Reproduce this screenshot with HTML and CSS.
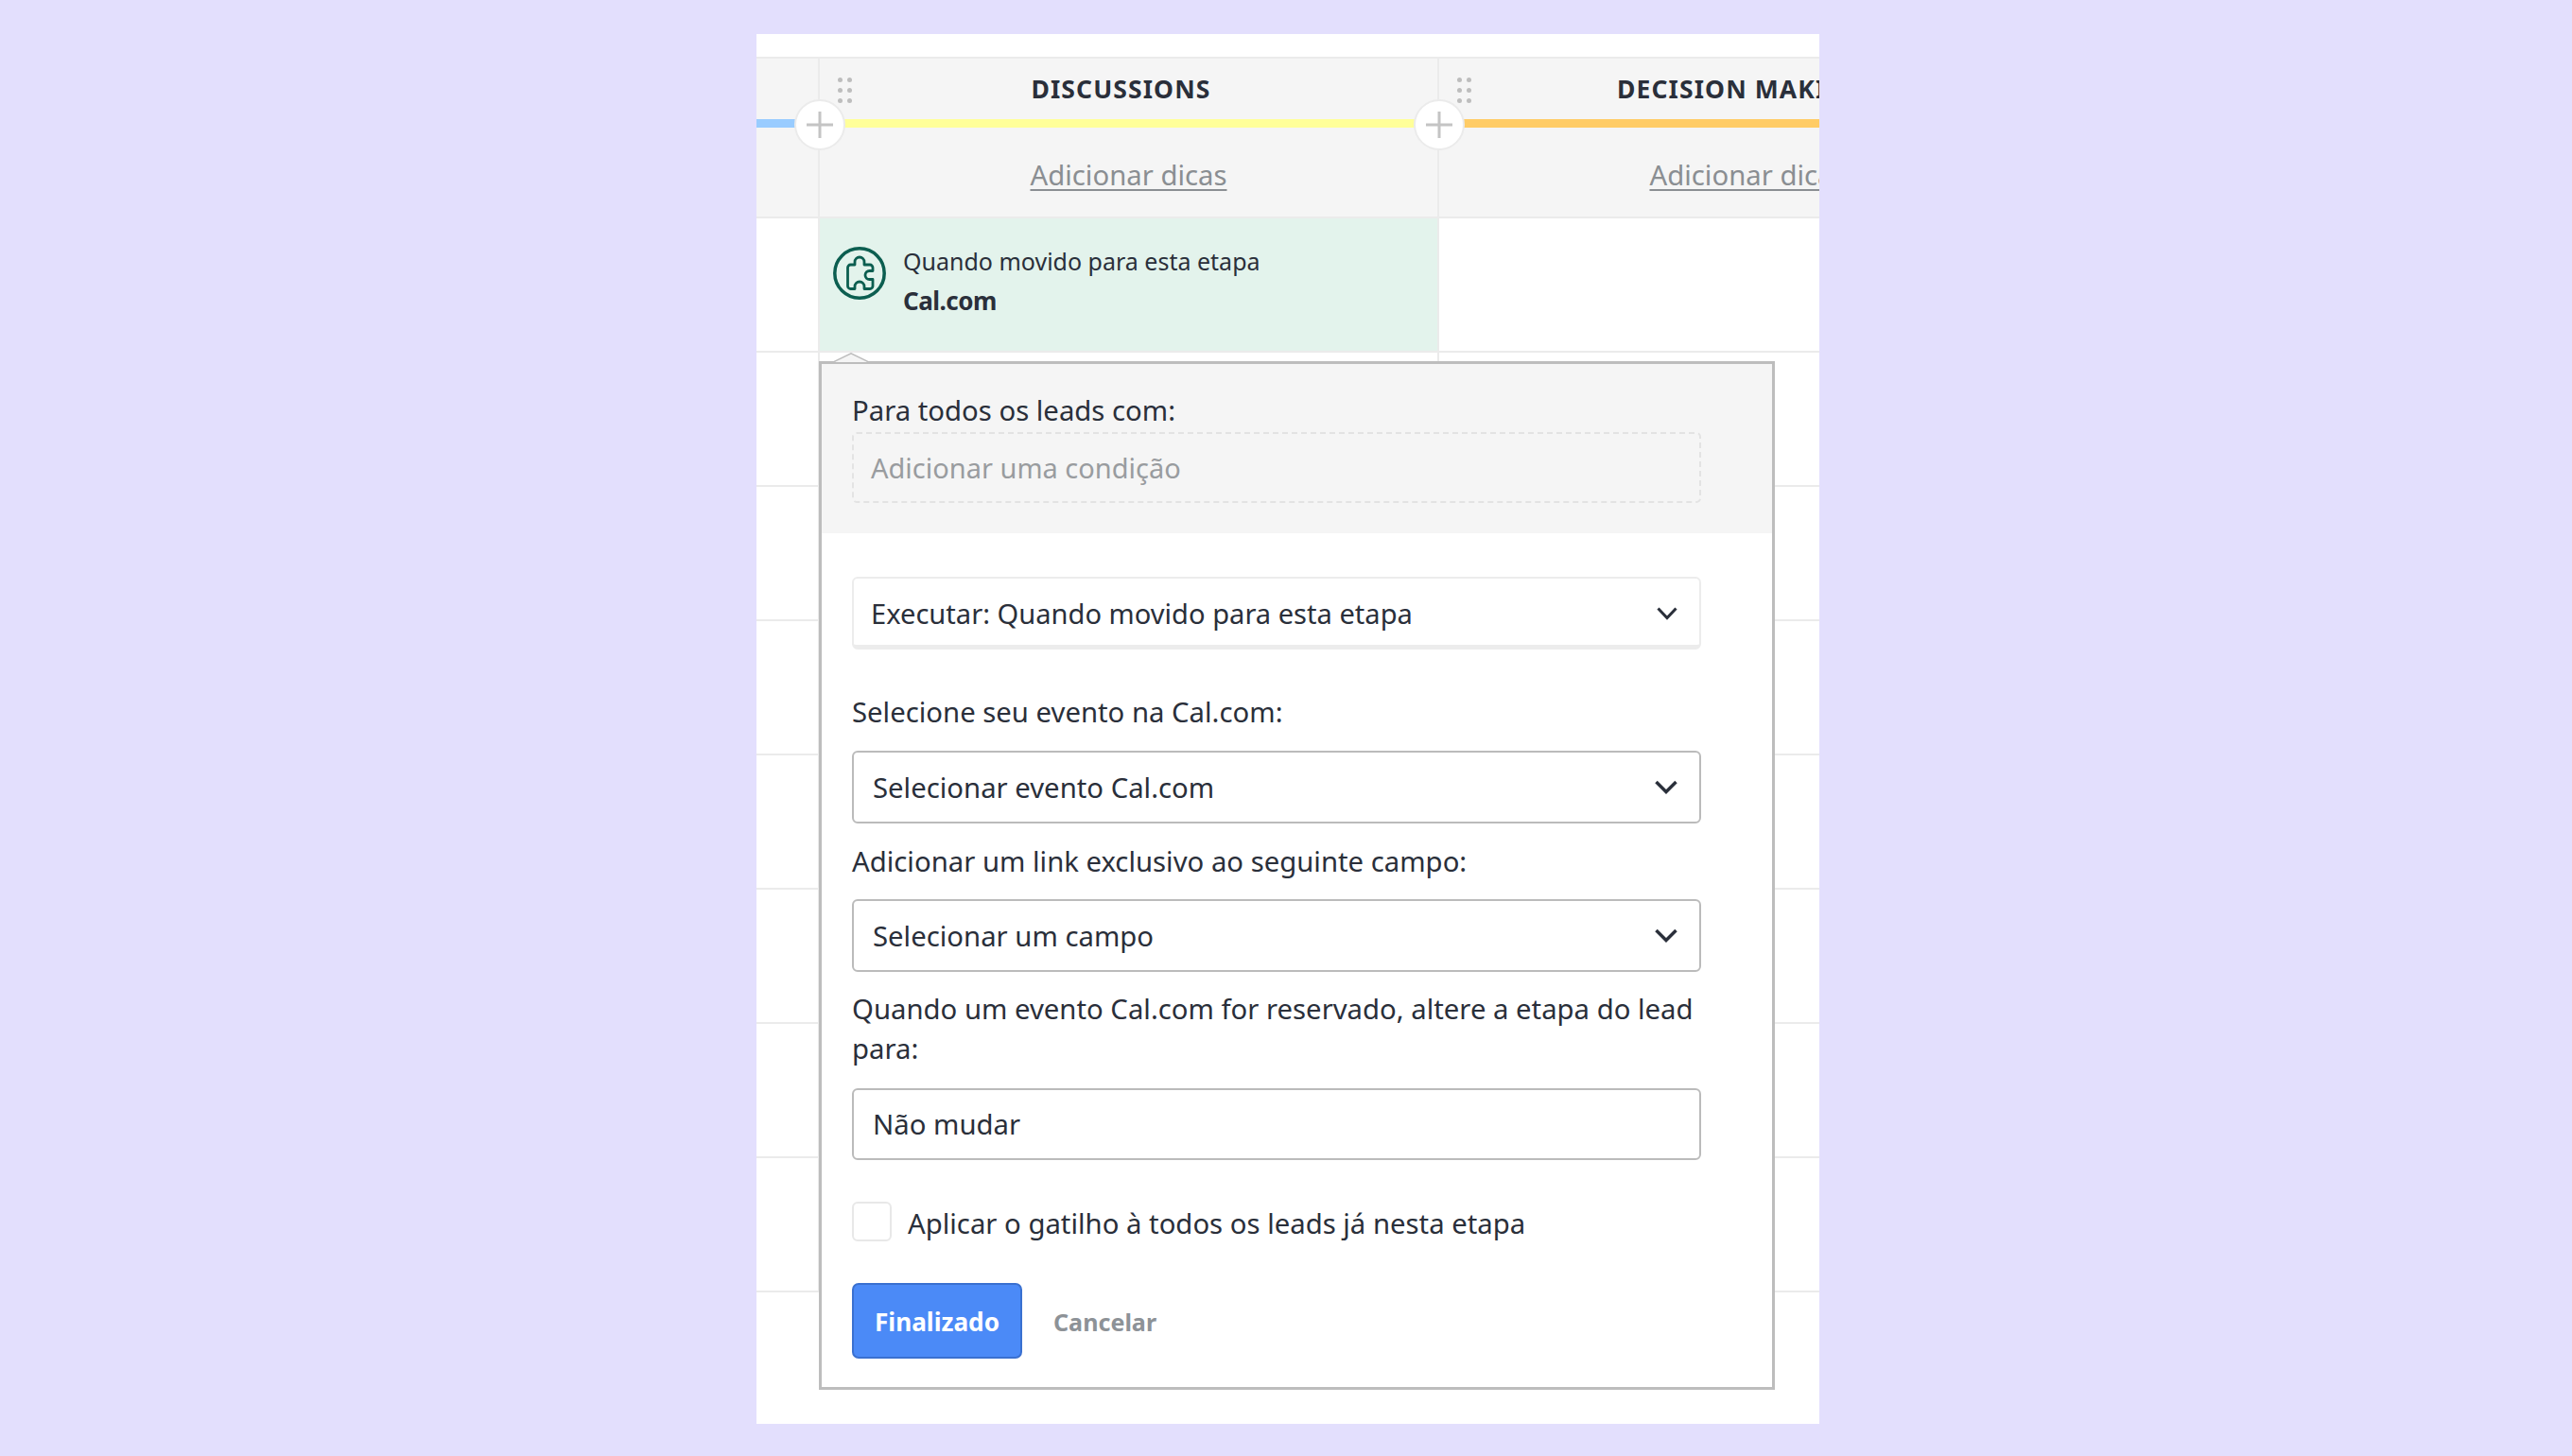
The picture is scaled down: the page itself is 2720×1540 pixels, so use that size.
FILE: index.html
```html
<!DOCTYPE html>
<html lang="pt">
<head>
<meta charset="utf-8">
<title>Pipeline</title>
<link rel="stylesheet" href="styles.css">
</head>
<body>
<main class="frame">
  <div class="board">
    <section class="col col-stub">
      <header class="head">
        <div class="title-row"></div>
        <div class="bar bar-blue"></div>
        <div class="tips"></div>
      </header>
      <div class="cell"></div><div class="cell"></div><div class="cell"></div><div class="cell"></div>
      <div class="cell"></div><div class="cell"></div><div class="cell"></div><div class="cell"></div>
    </section>

    <section class="col">
      <header class="head">
        <div class="title-row">
          <span class="dots"><i></i><i></i><i></i><i></i><i></i><i></i></span>
          <h2 class="title">DISCUSSIONS</h2>
        </div>
        <div class="bar bar-yellow"></div>
        <div class="tips"><a class="tips-link">Adicionar dicas</a></div>
      </header>
      <button class="add" aria-label="Adicionar etapa">
        <svg viewBox="0 0 30 30" width="30" height="30"><path d="M15 1v28M1 15h28"/></svg>
      </button>
      <div class="cell cell-trigger">
        <svg class="puzzle" viewBox="0 0 56 56" width="56" height="56">
          <circle cx="28" cy="28" r="26.2"/>
          <path d="M15.5 22a3 3 0 0 1 3-3h4.500v-3a5 5 0 0 1 10 0v3h6a3 3 0 0 1 3 3v3.500h-3.500a4.500 4.500 0 0 0 0 9h3.500v7a3 3 0 0 1-3 3h-6v-2.500a5 5 0 0 0-10 0v2.500h-4.500a3 3 0 0 1-3-3z"/>
        </svg>
        <div class="trigger-text">
          <p class="trigger-when">Quando movido para esta etapa</p>
          <p class="trigger-name">Cal.com</p>
        </div>
      </div>
      <div class="cell"></div><div class="cell"></div><div class="cell"></div>
      <div class="cell"></div><div class="cell"></div><div class="cell"></div><div class="cell"></div>
    </section>

    <section class="col">
      <header class="head">
        <div class="title-row">
          <span class="dots"><i></i><i></i><i></i><i></i><i></i><i></i></span>
          <h2 class="title title-clipped">DECISION MAKING</h2>
        </div>
        <div class="bar bar-orange"></div>
        <div class="tips"><a class="tips-link">Adicionar dicas</a></div>
      </header>
      <button class="add" aria-label="Adicionar etapa">
        <svg viewBox="0 0 30 30" width="30" height="30"><path d="M15 1v28M1 15h28"/></svg>
      </button>
      <div class="cell"></div><div class="cell"></div><div class="cell"></div><div class="cell"></div>
      <div class="cell"></div><div class="cell"></div><div class="cell"></div><div class="cell"></div>
    </section>
  </div>

  <div class="popover">
    <svg class="arrow" viewBox="0 0 36 10" width="36" height="10"><path class="arrow-fill" d="M0 10 18 1l18 9z"/><path class="arrow-line" d="M0 9.500 18 .8l18 8.700"/></svg>
    <div class="conditions">
      <p class="label">Para todos os leads com:</p>
      <div class="add-condition">Adicionar uma condição</div>
    </div>
    <form class="form">
      <div class="select select-soft">
        <span>Executar: Quando movido para esta etapa</span>
        <svg viewBox="0 0 22 14" width="22" height="14"><path d="M1.500 1.500 11 11.500l9.500-10"/></svg>
      </div>
      <p class="label label-event">Selecione seu evento na Cal.com:</p>
      <div class="select">
        <span>Selecionar evento Cal.com</span>
        <svg class="chev-bold" viewBox="0 0 24 15" width="24" height="15"><path d="M1.500 2 12 12.500 22.500 2"/></svg>
      </div>
      <p class="label label-next">Adicionar um link exclusivo ao seguinte campo:</p>
      <div class="select">
        <span>Selecionar um campo</span>
        <svg class="chev-bold" viewBox="0 0 24 15" width="24" height="15"><path d="M1.500 2 12 12.500 22.500 2"/></svg>
      </div>
      <p class="label label-next label-stage">Quando um evento Cal.com for reservado, altere a etapa do lead para:</p>
      <div class="select select-stage"><span>Não mudar</span></div>
      <label class="check-row">
        <span class="checkbox"></span>
        <span class="check-text">Aplicar o gatilho à todos os leads já nesta etapa</span>
      </label>
      <div class="actions">
        <button type="button" class="btn-done">Finalizado</button>
        <button type="button" class="btn-cancel">Cancelar</button>
      </div>
    </form>
  </div>
</main>
</body>
</html>
```
FILE: styles.css
```css
* { box-sizing: border-box; }
html, body { margin: 0; height: 100%; overflow: hidden; }
body {
  background: #e3dffd;
  padding: 36px 0 0 800px;
  font-family: "Noto Sans", "Liberation Sans", sans-serif;
  font-size: 29.3px;
  line-height: 42px;
  color: #2a2f3a;
}
p, h2 { margin: 0; }

.frame {
  position: relative;
  width: 1124px;
  height: 1470px;
  background: #fff;
  overflow: hidden;
  padding-top: 24px;
}
.board { display: flex; }
.col {
  position: relative;
  flex: 0 0 655px;
  border-left: 2px solid #ebebeb;
}
.col-stub { flex-basis: 65px; border-left: 0; }

.head {
  height: 171px;
  background: #f5f5f5;
  border-top: 2px solid #ebebeb;
  border-bottom: 2px solid #ebebeb;
}
.title-row {
  display: flex;
  align-items: center;
  height: 64px;
  padding-left: 19px;
}
.dots {
  display: grid;
  grid-template-columns: 5px 5px;
  gap: 6px 5px;
  flex: none;
  margin-top: 2px;
}
.dots i { width: 5px; height: 5px; border-radius: 50%; background: #bdbdbd; }
.title {
  flex: 1;
  min-width: 0;
  padding-right: 50px;
  font-size: 26.500px;
  font-weight: 700;
  letter-spacing: 1.100px;
  line-height: 40px;
  text-align: center;
  white-space: nowrap;
}
.title-clipped { padding-right: 0; margin-left: 154px; text-align: left; }
.bar { height: 9px; }
.bar-blue { background: #99ccff; }
.bar-yellow { background: #ffff99; }
.bar-orange { background: #ffcc66; }
.tips { height: 94px; padding-top: 29px; text-align: center; white-space: nowrap; }
.tips-link {
  color: #8a8e92;
  text-decoration: underline;
  text-decoration-thickness: 2px;
  text-underline-offset: 4px;
}

.add {
  position: absolute;
  left: -27px;
  top: 45px;
  width: 54px;
  height: 54px;
  padding: 0;
  display: flex;
  align-items: center;
  justify-content: center;
  border: 2px solid #ebebeb;
  border-radius: 50%;
  background: #fff;
}
.add svg path { fill: none; stroke: #c4c4c4; stroke-width: 3; }

.cell { height: 142px; border-bottom: 2px solid #ebebeb; }
.cell-trigger {
  display: flex;
  gap: 18px;
  padding: 24px 0 0 14px;
  background: #e3f3ec;
}
.puzzle { flex: none; margin-top: 6px; fill: none; stroke: #0c5e50; }
.puzzle circle { stroke-width: 3.500; }
.puzzle path { stroke-width: 2.800; stroke-linejoin: round; }
.trigger-when { font-size: 25px; }
.trigger-name { font-size: 26px; font-weight: 700; letter-spacing: -0.500px; }

.popover {
  position: absolute;
  left: 66px;
  top: 346px;
  width: 1011px;
  height: 1088px;
  background: #fff;
  border: 3px solid #bdbdbd;
}
.arrow { position: absolute; left: 13px; top: -12px; }
.arrow-fill { fill: #f5f5f5; }
.arrow-line { fill: none; stroke: #bdbdbd; stroke-width: 1.500; }

.conditions { background: #f5f5f5; padding: 28px 32px 32px; height: 179px; }
.add-condition {
  width: 898px;
  height: 75px;
  margin-top: 2px;
  padding-left: 18px;
  display: flex;
  align-items: center;
  border: 2px dashed #e3e3e3;
  border-radius: 5px;
  font-size: 29px;
  color: #999c9f;
}

.form { padding: 46px 75px 0 32px; }
.select {
  display: flex;
  align-items: center;
  justify-content: space-between;
  height: 77px;
  padding: 0 23px 0 20px;
  border: 2px solid #bbb;
  border-radius: 6px;
  background: #fff;
}
.select svg { flex: none; fill: none; stroke: #2a2f3a; stroke-width: 3; }
.select svg.chev-bold { stroke-width: 3.500; }
.select-soft {
  padding: 3px 23px 0 18px;
  border: 2px solid #ececec;
  border-bottom-width: 5px;
  font-size: 29.100px;
}
.label-event { margin: 45px 0 20px; }
.label-next { margin: 19px 0; }
.label-stage { margin: 18px 0 21px; }
.select-stage { height: 76px; }

.check-row { display: flex; align-items: center; gap: 17px; height: 42px; margin-top: 44px; }
.check-text { padding-top: 3px; }
.checkbox {
  flex: none;
  width: 42px;
  height: 42px;
  border: 2px solid #e8e8e8;
  border-radius: 6px;
  background: #fff;
}
.actions { display: flex; align-items: center; gap: 33px; margin-top: 44px; }
.btn-done {
  width: 180px;
  height: 80px;
  padding: 3px 0 0;
  border: 2px solid #3a70d0;
  border-radius: 7px;
  background: #4b8af7;
  color: #fff;
  font: 700 26.200px/1 "Noto Sans", sans-serif;
}
.btn-cancel {
  padding: 3px 0 0;
  border: 0;
  background: none;
  color: #8d9297;
  font: 700 25.100px/1 "Noto Sans", sans-serif;
}
```
